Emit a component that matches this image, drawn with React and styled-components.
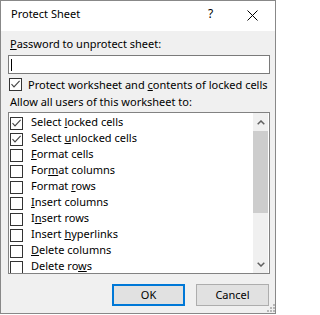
import React from "react";
import styled, { createGlobalStyle } from "styled-components";

const Global = createGlobalStyle`
  html, body { margin: 0; padding: 0; background: #ffffff; }
  body { font-family: "Noto Sans", "Open Sans", sans-serif; font-size: 11px; color: #000; }
  * { box-sizing: border-box; }
`;

const Window = styled.div`
  width: 276px;
  height: 314px;
  border: 1px solid #888888;
  display: flex;
  flex-direction: column;
  background: #f0f0f0;
  overflow: hidden;
`;

const TitleBar = styled.div`
  height: 30px;
  background: #ffffff;
  display: flex;
  align-items: flex-start;
  padding: 7px 17px 0 10px;
  flex-shrink: 0;
`;

const Title = styled.div`
  flex: 1;
  font-size: 11px;
  line-height: 12px;
  white-space: nowrap;
`;

const TitleHelp = styled.div`
  width: 39px;
  font-size: 12px;
  line-height: 12px;
`;

const CloseIcon = styled.svg`
  margin-top: 2px;
  display: block;
`;

const Body = styled.div`
  flex: 1;
  padding: 7px 6px 0 7px;
  display: flex;
  flex-direction: column;
  position: relative;
`;

const Label = styled.div`
  line-height: 12px;
  height: 12px;
  margin-left: 2px;
  margin-top: ${(p) => p.$mt || 0}px;
  white-space: nowrap;
`;

const Key = styled.span`
  text-decoration: underline;
  text-underline-offset: 1px;
`;

const Input = styled.div`
  margin-top: 5px;
  width: 262px;
  height: 19px;
  background: #fff;
  border: 1px solid #7a7a7a;
  display: flex;
  align-items: center;
  padding-left: 2px;
`;

const Caret = styled.div`
  width: 1px;
  height: 12px;
  background: #000;
`;

const CheckRow = styled.div`
  display: flex;
  align-items: flex-start;
  height: ${(p) => p.$h || 16}px;
  margin-top: ${(p) => p.$mt || 0}px;
  padding-left: ${(p) => p.$pl || 0}px;
  white-space: nowrap;
  flex-shrink: 0;
`;

const Box = styled.div`
  width: 13px;
  height: 13px;
  border: 1px solid #333333;
  background: #ffffff;
  flex-shrink: 0;
  margin-top: ${(p) => p.$mt || 0}px;
  margin-right: ${(p) => p.$gap}px;
  display: flex;
  align-items: center;
  justify-content: center;
`;

const RowText = styled.span`
  line-height: 12px;
  margin-top: ${(p) => p.$mt || 0}px;
`;

const List = styled.div`
  margin-top: 4px;
  width: 262px;
  height: 162px;
  border: 1px solid #828282;
  background: #ffffff;
  display: flex;
  overflow: hidden;
`;

const Items = styled.div`
  flex: 1;
  padding-top: 3px;
  padding-left: 1px;
  display: flex;
  flex-direction: column;
`;

const ScrollBar = styled.div`
  width: 15px;
  margin-right: 1px;
  background: #f0f0f0;
  display: flex;
  flex-direction: column;
  flex-shrink: 0;
`;

const ScrollArrow = styled.div`
  height: ${(p) => p.$h}px;
  display: flex;
  align-items: center;
  justify-content: center;
  flex-shrink: 0;
`;

const Thumb = styled.div`
  height: 82px;
  background: #cdcdcd;
  flex-shrink: 0;
`;

const Track = styled.div`
  flex: 1;
`;

const Buttons = styled.div`
  display: flex;
  justify-content: flex-end;
  gap: 11px;
  margin-top: 10px;
`;

const Button = styled.div`
  width: 73px;
  height: 22px;
  background: #e1e1e1;
  border: ${(p) => (p.$default ? "2px solid #0078d7" : "1px solid #adadad")};
  display: flex;
  align-items: center;
  justify-content: center;
  line-height: 12px;
`;

const Grip = styled.svg`
  position: absolute;
  right: 0;
  bottom: 1px;
`;

const Check = () => (
  <svg width="11" height="11" viewBox="0 0 11 11">
    <path d="M1.5 5.2 L4 7.9 L9.6 1.8" fill="none" stroke="#444" strokeWidth="1.1" />
  </svg>
);

const Chevron = ({ up }) => (
  <svg width="8" height="5" viewBox="0 0 8 5">
    <path
      d={up ? "M0.7 4.3 L4 1 L7.3 4.3" : "M0.7 0.7 L4 4 L7.3 0.7"}
      fill="none"
      stroke="#606060"
      strokeWidth="1.5"
    />
  </svg>
);

const items = [
  { pre: "Select ", key: "l", post: "ocked cells", checked: true },
  { pre: "Select ", key: "u", post: "nlocked cells", checked: true },
  { pre: "", key: "F", post: "ormat cells" },
  { pre: "For", key: "m", post: "at columns" },
  { pre: "Format ", key: "r", post: "ows" },
  { pre: "", key: "I", post: "nsert columns" },
  { pre: "I", key: "n", post: "sert rows" },
  { pre: "Insert ", key: "h", post: "yperlinks" },
  { pre: "", key: "D", post: "elete columns" },
  { pre: "Delete ro", key: "w", post: "s" },
];

export default function App() {
  return (
    <>
      <Global />
      <Window>
        <TitleBar>
          <Title>Protect Sheet</Title>
          <TitleHelp>?</TitleHelp>
          <CloseIcon width="11" height="11" viewBox="0 0 11 11">
            <path d="M0.5 0.5 L10.5 10.5 M10.5 0.5 L0.5 10.5" stroke="#000" strokeWidth="1" />
          </CloseIcon>
        </TitleBar>
        <Body>
          <Label>
            <Key>P</Key>assword to unprotect sheet:
          </Label>
          <Input>
            <Caret />
          </Input>
          <CheckRow $mt={4} $pl={1} $h={13}>
            <Box $gap={6}>
              <Check />
            </Box>
            <RowText $mt={1}>
              Protect worksheet and <Key>c</Key>ontents of locked cells
            </RowText>
          </CheckRow>
          <Label $mt={5}>Allow all users of this worksheet to:</Label>
          <List>
            <Items>
              {items.map((it, i) => (
                <CheckRow key={i}>
                  <Box $gap={8} $mt={1}>
                    {it.checked && <Check />}
                  </Box>
                  <RowText>
                    {it.pre}
                    <Key>{it.key}</Key>
                    {it.post}
                  </RowText>
                </CheckRow>
              ))}
            </Items>
            <ScrollBar>
              <ScrollArrow $h={18}>
                <Chevron up />
              </ScrollArrow>
              <Thumb />
              <Track />
              <ScrollArrow $h={18}>
                <Chevron />
              </ScrollArrow>
            </ScrollBar>
          </List>
          <Buttons>
            <Button $default>OK</Button>
            <Button>Cancel</Button>
          </Buttons>
          <Grip width="8" height="8" viewBox="0 0 8 8">
            <rect x="6" y="0" width="2" height="2" fill="#b8b8b8" />
            <rect x="3" y="3" width="2" height="2" fill="#b8b8b8" />
            <rect x="6" y="3" width="2" height="2" fill="#b8b8b8" />
            <rect x="0" y="6" width="2" height="2" fill="#b8b8b8" />
            <rect x="3" y="6" width="2" height="2" fill="#b8b8b8" />
            <rect x="6" y="6" width="2" height="2" fill="#b8b8b8" />
          </Grip>
        </Body>
      </Window>
    </>
  );
}
